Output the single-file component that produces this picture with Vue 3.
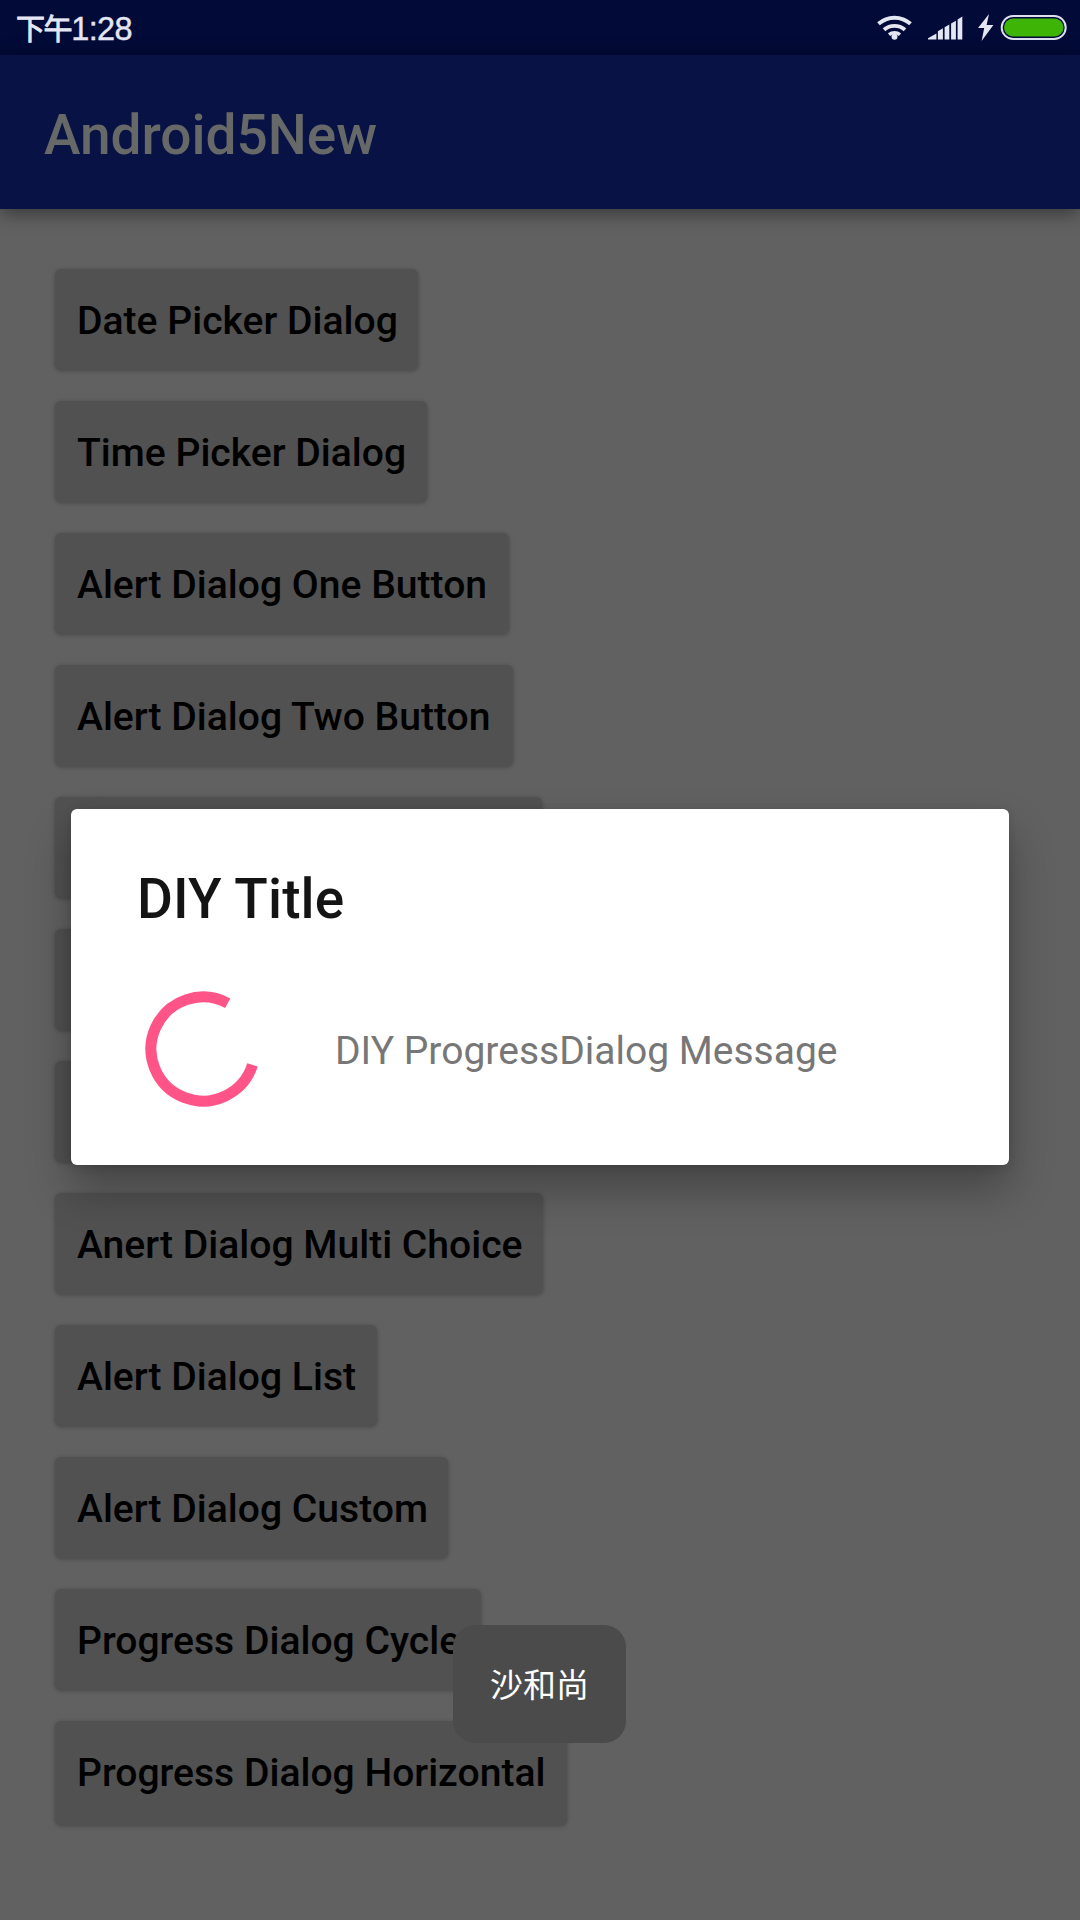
<script setup>
const buttons = [
  { label: 'Date Picker Dialog', width: 363 },
  { label: 'Time Picker Dialog', width: 372 },
  { label: 'Alert Dialog One Button', width: 454 },
  { label: 'Alert Dialog Two Button', width: 458 },
  { label: '', width: 487 },
  { label: '', width: 488 },
  { label: '', width: 492 },
  { label: 'Anert Dialog Multi Choice', width: 488 },
  { label: 'Alert Dialog List', width: 322 },
  { label: 'Alert Dialog Custom', width: 393 },
  { label: 'Progress Dialog Cycle', width: 426 },
  { label: 'Progress Dialog Horizontal', width: 512 }
]
</script>

<template>
  <div class="screen">
    <header class="status">
      <span class="clock"><span class="period">下午</span>1:28</span>
      <svg class="indicators" width="200" height="54" viewBox="0 0 200 54">
        <g fill="none" stroke="#e4e6f2" stroke-width="4">
          <path d="M-1.5 23.8a24 24 0 0 1 32 0" />
          <path d="M4 29.8a16 16 0 0 1 21 0" stroke-width="3.8" />
          <path d="M9 34.6a9 9 0 0 1 11 0" stroke-width="3.4" />
        </g>
        <circle cx="14.5" cy="36.8" r="3" fill="#e4e6f2" />
        <path fill="#e4e6f2" d="M48 39.6v-1.400l8.400-4.800v6.200zM57.900 39.600v-8.400l5-2.900v11.300zM64.600 39.600v-12.300l4.700-2.700v15zM71.100 39.600v-16.100l4.800-2.700v18.800zM77.600 39.600v-20.200l4.700-2.800v23z" />
        <path fill="#e4e6f2" d="M109 14l-11 14h6.200l-2.600 13 11.800-16h-6.800z" />
        <rect x="121.700" y="16" width="64" height="23" rx="11.500" fill="#020a37" stroke="#dde0ee" stroke-width="2" />
        <rect x="124" y="18.500" width="59.500" height="18" rx="9" fill="#3eb406" />
      </svg>
    </header>
    <div class="appbar"><h1>Android5New</h1></div>
    <main class="list">
      <button v-for="(b, i) in buttons" :key="i" class="item" :style="{ width: b.width + 'px' }">{{ b.label }}</button>
    </main>

    <section class="dialog">
      <h2>DIY Title</h2>
      <div class="body">
        <svg width="120" height="120" viewBox="-60 -60 120 120">
          <path d="M49.500 15.900A52 52 0 1 1 24.700 -45.760" fill="none" stroke="#ff5487" stroke-width="11" />
        </svg>
        <p>DIY ProgressDialog Message</p>
      </div>
    </section>

    <div class="toast">沙和尚</div>
  </div>
</template>

<style>
body { margin: 0; background: #616161; }
</style>

<style scoped>
.screen {
  position: relative;
  width: 1080px;
  height: 1920px;
  overflow: hidden;
  background: #616161;
  font-family: Roboto, "Noto Sans CJK SC", sans-serif;
  display: flex;
  flex-direction: column;
}
.status {
  height: 55px;
  flex: none;
  background: #020a37;
  display: flex;
  justify-content: space-between;
  align-items: flex-start;
  padding-left: 16px;
}
.clock {
  display: flex;
  align-items: baseline;
  font-family: "Liberation Sans", sans-serif;
  font-size: 32.500px;
  letter-spacing: -0.600px;
  line-height: 55px;
  color: #e4e6f2;
  -webkit-text-stroke: 0.400px #e4e6f2;
  white-space: nowrap;
}
.period {
  font-family: "Noto Sans CJK SC", sans-serif;
  font-size: 29px;
  letter-spacing: -1.400px;
  -webkit-text-stroke: 0.900px #e4e6f2;
}
.indicators { display: block; overflow: visible; }
.appbar {
  height: 154px;
  flex: none;
  background: #091244;
  display: flex;
  align-items: center;
  padding: 0 44px;
  box-shadow: 0 4px 18px rgba(0, 0, 0, 0.45);
}
h1 {
  margin: 5px 0 0;
  font-size: 55px;
  font-weight: 500;
  color: #666967;
  line-height: 64px;
}
.list {
  display: flex;
  flex-direction: column;
  align-items: flex-start;
  gap: 31px;
  padding: 60px 55px 0;
}
.item {
  height: 101px;
  flex: none;
  border: 0;
  border-radius: 6px;
  padding: 3px 0 0 22px;
  text-align: left;
  white-space: nowrap;
  font: 500 39.100px/46px Roboto, sans-serif;
  color: #000;
  background: #515151;
  box-shadow: 0 1px 4px rgba(0, 0, 0, 0.28);
}
.item:last-child { height: 104px; padding-bottom: 3px; }
.dialog {
  position: absolute;
  left: 71px;
  top: 809px;
  width: 938px;
  height: 356px;
  box-sizing: border-box;
  padding: 55px 66px 0;
  border-radius: 6px;
  background: #fff;
  box-shadow: 0 24px 44px rgba(0, 0, 0, 0.3), 0 2px 10px rgba(0, 0, 0, 0.12);
}
h2 {
  margin: 0;
  font-size: 55px;
  font-weight: 500;
  letter-spacing: 0.150px;
  line-height: 70px;
  color: #141414;
}
.body {
  display: flex;
  align-items: center;
  margin-top: 55px;
  padding-left: 6px;
}
p {
  margin: 4px 0 0 72px;
  font-size: 39px;
  line-height: 46px;
  color: #777;
  white-space: nowrap;
}
.toast {
  position: absolute;
  left: 453px;
  top: 1625px;
  width: 173px;
  height: 118px;
  border-radius: 22px;
  background: #4b4b4b;
  color: #fff;
  font-family: "Noto Sans CJK SC", sans-serif;
  font-size: 33px;
  line-height: 117px;
  text-align: center;
}
</style>
